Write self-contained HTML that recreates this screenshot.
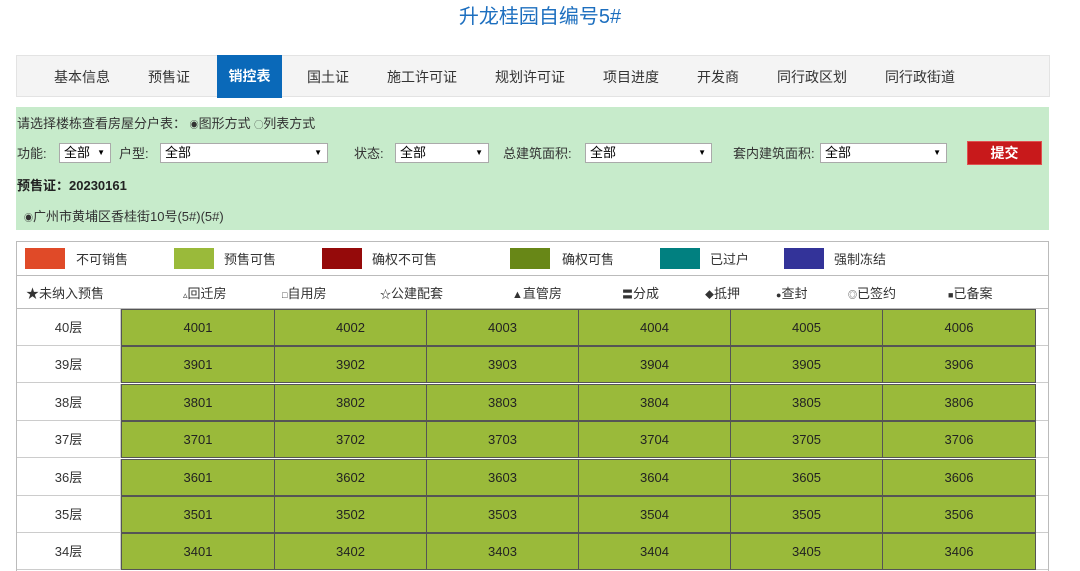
<!DOCTYPE html>
<html><head><meta charset="utf-8"><style>
*{margin:0;padding:0;box-sizing:border-box}
body{width:1080px;height:571px;overflow:hidden;background:#fff;font-family:"Liberation Sans","Noto Sans CJK SC",sans-serif;font-size:13px;color:#333;position:relative}
.a{position:absolute;white-space:nowrap;line-height:18px}
.title{left:0;width:1080px;top:4px;text-align:center;font-size:20px;line-height:26px;color:#1d6fbf}
.nav{left:16px;top:55px;width:1034px;height:42px;background:#f4f4f4;border:1px solid #e3e3e3}
.nav span{position:absolute;top:12px;font-size:14px;line-height:18px;color:#333}
.act{left:217px;top:55px;width:65px;height:43px;background:#0a69b9;color:#fff;font-weight:bold;font-size:14px;text-align:center;line-height:43px}
.green{left:16px;top:107px;width:1033px;height:123px;background:#c7ebcb}
.sel{position:absolute;height:20px;background:#fff;border:1px solid #aaa;font-size:13px;line-height:18px;padding-left:4px;color:#000}
.sel:after{content:"▼";position:absolute;right:5px;top:0;font-size:8px}
.tbl{left:16px;top:241px;width:1033px;height:330px;border:1px solid #bbb;border-bottom:none}
.sw{position:absolute;top:248px;width:40px;height:21px}
.cell{position:absolute;height:36px;background:#9aba3a;border:1px solid #555;text-align:center;line-height:35px;color:#222;font-size:13px}
.fl{position:absolute;left:17px;width:104px;text-align:center;color:#333;height:37px;line-height:37px;border-bottom:1px solid #ccc;border-right:1px solid #ccc}
.sm{font-size:9px}
</style></head><body>
<div class="a title">升龙桂园自编号5#</div>
<div class="a nav">
<span style="left:37px">基本信息</span><span style="left:131px">预售证</span><span style="left:290px">国土证</span><span style="left:370px">施工许可证</span><span style="left:478px">规划许可证</span><span style="left:586px">项目进度</span><span style="left:680px">开发商</span><span style="left:760px">同行政区划</span><span style="left:868px">同行政街道</span>
</div>
<div class="a act">销控表</div>
<div class="a green"></div>
<div class="a" style="left:17px;top:115px">请选择楼栋查看房屋分户表： <span class="sm">◉</span>图形方式 <span class="sm">◯</span>列表方式</div>
<div class="a" style="left:17px;top:145px">功能:</div>
<div class="sel" style="left:59px;top:143px;width:52px">全部</div>
<div class="a" style="left:119px;top:145px">户型:</div>
<div class="sel" style="left:160px;top:143px;width:168px">全部</div>
<div class="a" style="left:354px;top:145px">状态:</div>
<div class="sel" style="left:395px;top:143px;width:94px">全部</div>
<div class="a" style="left:503px;top:145px">总建筑面积:</div>
<div class="sel" style="left:585px;top:143px;width:127px">全部</div>
<div class="a" style="left:733px;top:145px">套内建筑面积:</div>
<div class="sel" style="left:820px;top:143px;width:127px">全部</div>
<div class="a" style="left:967px;top:141px;width:75px;height:24px;background:#c8191b;border:1px solid #e05050;color:#fff;font-weight:bold;font-size:14px;text-align:center;line-height:22px">提交</div>
<div class="a" style="left:17px;top:177px;font-weight:bold;color:#222">预售证：20230161</div>
<div class="a" style="left:24px;top:208px"><span class="sm">◉</span>广州市黄埔区香桂街10号(5#)(5#)</div>
<div class="a tbl"></div>
<div class="a" style="left:17px;top:275px;width:1031px;border-top:1px solid #bbb"></div>
<div class="a" style="left:17px;top:308px;width:1031px;border-top:1px solid #bbb"></div>
<div class="sw" style="left:25px;background:#e04a28"></div><div class="a" style="left:76px;top:251px">不可销售</div>
<div class="sw" style="left:174px;background:#9aba3a"></div><div class="a" style="left:224px;top:251px">预售可售</div>
<div class="sw" style="left:322px;background:#950a0a"></div><div class="a" style="left:372px;top:251px">确权不可售</div>
<div class="sw" style="left:510px;background:#688717"></div><div class="a" style="left:562px;top:251px">确权可售</div>
<div class="sw" style="left:660px;background:#018080"></div><div class="a" style="left:710px;top:251px">已过户</div>
<div class="sw" style="left:784px;background:#333399"></div><div class="a" style="left:834px;top:251px">强制冻结</div>
<div class="a" style="left:26px;top:285px">★未纳入预售</div>
<div class="a" style="left:183px;top:285px"><span class="sm">▵</span>回迁房</div>
<div class="a" style="left:282px;top:285px"><span class="sm">□</span>自用房</div>
<div class="a" style="left:380px;top:285px"><span style="font-size:11px">☆</span>公建配套</div>
<div class="a" style="left:512px;top:285px"><span style="font-size:11px">▲</span>直管房</div>
<div class="a" style="left:622px;top:285px"><span style="font-size:11px">〓</span>分成</div>
<div class="a" style="left:705px;top:285px"><span class="sm">◆</span>抵押</div>
<div class="a" style="left:776px;top:285px"><span class="sm">●</span>查封</div>
<div class="a" style="left:848px;top:285px"><span class="sm">◎</span>已签约</div>
<div class="a" style="left:948px;top:285px"><span class="sm">■</span>已备案</div>
<div id="rows"></div>
<script>
var h='',fl=[40,39,38,37,36,35,34],xs=[121,274,426,578,730,882];
fl.forEach(function(f,i){var y=309+Math.round(i*37.4);
h+='<div class="fl" style="top:'+y+'px">'+f+'层</div>';
h+='<div style="position:absolute;left:121px;top:'+y+'px;width:914px;height:37px;border:1px solid #555"></div>';
h+='<div style="position:absolute;left:1035px;top:'+(y+36)+'px;width:13px;border-top:1px solid #ccc"></div>';
xs.forEach(function(x,j){var w=(j<5?xs[j+1]:1035)-x+1;
h+='<div class="cell" style="left:'+x+'px;top:'+y+'px;width:'+w+'px;height:37px">'+f+'0'+(j+1)+'</div>';});});
document.getElementById('rows').innerHTML=h;
</script>
</body></html>
